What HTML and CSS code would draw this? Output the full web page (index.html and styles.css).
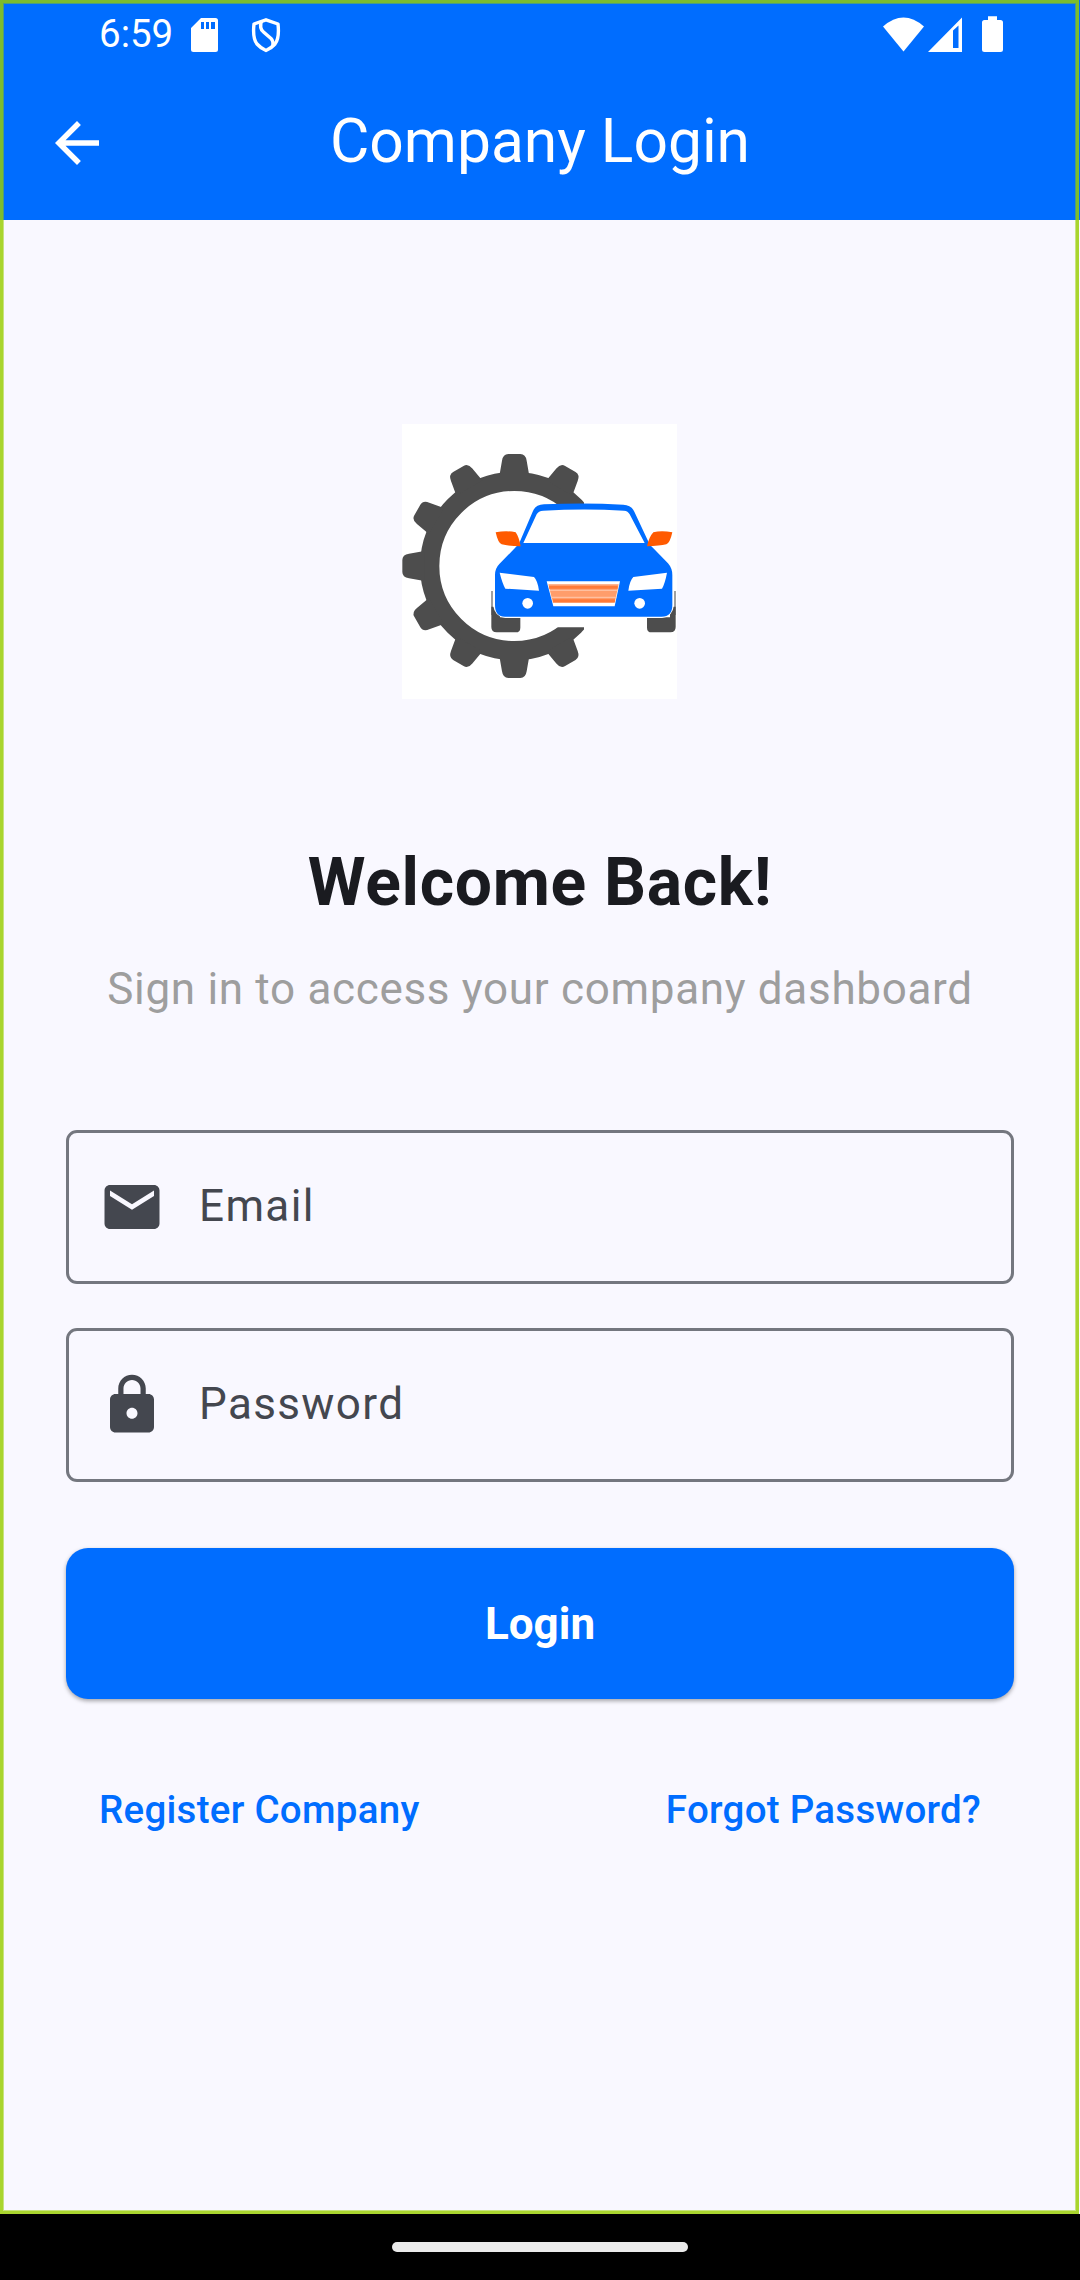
FILE: index.html
```html
<!DOCTYPE html>
<html lang="en">
<head>
<meta charset="utf-8">
<title>Company Login</title>
<link rel="stylesheet" href="styles.css">
</head>
<body>
<div class="app">
  <div class="status">
    <span class="clock">6:59</span>
    <svg class="sd" viewBox="0 0 27 34"><path fill="#fff" fill-rule="evenodd" d="M10 0H24.500Q27 0 27 2.500V31.500Q27 34 24.500 34H2.500Q0 34 0 31.500V10ZM10 4V11H13V4ZM15 4V11H18V4ZM20 4V11H24V4Z"/></svg>
    <svg class="shield" viewBox="0 0 30 36"><g fill="none" stroke="#fff" stroke-width="3.400" stroke-linejoin="round"><path d="M15 2.800 27 7Q28.600 21 24 27Q20 31.500 15 33.500Q10 31.500 6 27Q1.400 21 3 7Z"/><path d="M10.500 4Q8 11.500 12.500 15L20 21.500Q23 24.500 21.500 29.500"/></g></svg>
    <svg class="signals" viewBox="0 0 120 36"><g fill="#fff"><path d="M0 10.500Q20.500-7.500 41 10.500L20.500 35.500Z"/><path fill-rule="evenodd" d="M45 36 79 1.500V36ZM70 14.500V32H75.500V9.500Z"/><path d="M105 .3H114V4H117.500Q120 4 120 6.500V33.500Q120 36 117.500 36H101.500Q99 36 99 33.500V6.500Q99 4 101.500 4H105Z"/></g></svg>
  </div>
  <header class="bar">
    <svg class="back" viewBox="0 0 24 24"><path fill="#fff" d="M20 11H7.830l5.590-5.590L12 4l-8 8 8 8 1.410-1.410L7.830 13H20v-2z"/></svg>
    <h1 class="title">Company Login</h1>
  </header>
  <main class="content">
    <svg class="logo" viewBox="36 27 825 825">
      <defs>
        <path id="tooth" d="M-45-270-37-316Q-34-336-18-336H18Q34-336 37-316L45-270Z"/>
        <clipPath id="gear-clip"><path d="M36 27H582V268H480V637H582V852H36Z"/></clipPath>
      </defs>
      <rect x="36" y="27" width="825" height="825" fill="#fff"/>
      <g clip-path="url(#gear-clip)" fill="#4d4d4d">
        <circle cx="373" cy="453" r="254" fill="none" stroke="#4d4d4d" stroke-width="58"/>
        <g transform="translate(373 453)">
          <use href="#tooth"/>
          <use href="#tooth" transform="rotate(30)"/>
          <use href="#tooth" transform="rotate(150)"/>
          <use href="#tooth" transform="rotate(180)"/>
          <use href="#tooth" transform="rotate(210)"/>
          <use href="#tooth" transform="rotate(240)"/>
          <use href="#tooth" transform="rotate(270)"/>
          <use href="#tooth" transform="rotate(300)"/>
          <use href="#tooth" transform="rotate(330)"/>
        </g>
      </g>
      <path fill="#a0a0a0" d="M303 528H309V600H303ZM852 528H858V600H852Z"/>
      <path fill="#4d4d4d" d="M304 575H330V607H391V638Q391 652 377 652H320Q304 652 304 636ZM857 575H840V607H771V638Q771 652 785 652H841Q857 652 857 636Z"/>
      <path fill="#fff" d="M309 528V570Q314 606 346 609H816Q848 606 852 570V528Z"/>
      <path fill="#006dff" d="M387 386 428 290Q436 269 462 268Q585 262 700 269Q724 270 733 290L778 386Q782 392 790 400L834 445Q847 460 847 480V570Q847 605 815 605H345Q315 605 315 570V480Q315 460 328 447L372 402Z"/>
      <path fill="#fff" d="M400 384 440 298Q445 288 460 287Q585 280 702 287Q714 288 719 298L764 384Z"/>
      <path fill="#ff5a00" d="M317 352Q350 346 377 352Q387 366 392 394Q355 393 335 388Q324 384 317 352ZM847 352Q814 346 790 352Q777 366 771 394Q809 393 829 388Q840 384 847 352Z"/>
      <path fill="#fff" d="M329 473 432 486Q443 497 447 527L346 521Q337 505 329 473ZM831 473 730 486Q719 497 715 527L816 521Q825 505 831 473ZM470 499H690L674 574H490Z"/>
      <circle cx="413" cy="565" r="16" fill="#fff"/><circle cx="749" cy="565" r="16" fill="#fff"/>
      <path fill="#ff9d6b" d="M475 508H686L674 564H489Z"/>
      <path stroke="#ff7a38" stroke-width="8" d="M477 517H683M489 557H675"/>
      <path stroke="#ffc0a0" stroke-width="4" d="M480 526H682M484 547H679"/>
    </svg>
    <h2 class="welcome">Welcome Back!</h2>
    <p class="sub">Sign in to access your company dashboard</p>
    <div class="field">
      <svg class="icon" viewBox="0 0 24 24"><path fill="#44474f" d="M20 4H4c-1.100 0-1.990.9-1.990 2L2 18c0 1.100.9 2 2 2h16c1.100 0 2-.9 2-2V6c0-1.100-.9-2-2-2zm0 4-8 5-8-5V6l8 5 8-5v2z"/></svg>
      <span class="label">Email</span>
    </div>
    <div class="field">
      <svg class="icon" viewBox="0 0 24 24"><path fill="#44474f" d="M18 8h-1V6c0-2.760-2.240-5-5-5S7 3.240 7 6v2H6c-1.100 0-2 .9-2 2v10c0 1.100.9 2 2 2h12c1.100 0 2-.9 2-2V10c0-1.100-.9-2-2-2zm-6 9c-1.100 0-2-.9-2-2s.9-2 2-2 2 .9 2 2-.9 2-2 2zm3.100-9H8.900V6c0-1.710 1.390-3.100 3.100-3.100 1.710 0 3.100 1.390 3.100 3.100v2z"/></svg>
      <span class="label">Password</span>
    </div>
    <button class="login">Login</button>
    <div class="links"><a>Register Company</a><a>Forgot Password?</a></div>
  </main>
  <div class="frame"></div>
</div>
<div class="nav"><div class="pill"></div></div>
</body>
</html>
```
FILE: styles.css
```css
* { box-sizing: border-box; }
body { margin: 0; width: 1080px; height: 2280px; background: #000; font-family: Roboto, sans-serif; overflow: hidden; }
h1, h2, p { margin: 0; font-weight: 400; }
svg { display: block; flex: none; }
.app { position: relative; height: 2214px; background: #f9f8ff; }
.frame { position: absolute; inset: 0 1px 0 0; border: 3px solid rgba(151, 205, 0, .82); box-shadow: inset 0 0 0 1px rgba(151, 205, 0, .5); }
.status { height: 66px; background: #006dff; display: flex; align-items: flex-start; padding-left: 99px; }
.clock { width: 92px; color: #fff; font-size: 38.5px; line-height: 45px; margin-top: 11px; }
.sd { width: 27px; height: 34px; margin-top: 18px; }
.shield { width: 30px; height: 36px; margin: 17px 0 0 33px; }
.signals { width: 120px; height: 36px; margin: 16px 0 0 602px; }
.bar { height: 154px; background: #006dff; display: flex; align-items: center; padding: 0 44px; }
.back { width: 66px; height: 66px; }
.title { flex: 1; margin-right: 66px; text-align: center; color: #fff; font-size: 60.5px; line-height: 77px; position: relative; top: -2px; }
.content { padding: 204px 66px 0; display: flex; flex-direction: column; }
.logo { width: 275px; height: 275px; margin-left: 336px; }
.welcome { margin-top: 140px; text-align: center; font-size: 66px; line-height: 88px; font-weight: 700; color: #1a1b20; letter-spacing: .6875px; }
.sub { margin-top: 29px; text-align: center; font-size: 44px; line-height: 66px; color: #9e9e9e; letter-spacing: .6875px; white-space: nowrap; }
.field { height: 154px; border: 3px solid #74777f; border-radius: 11px; display: flex; align-items: center; padding-left: 30px; margin-top: 44px; }
.sub + .field { margin-top: 108px; }
.icon { width: 66px; height: 66px; }
.label { margin: 0 0 2px 34px; font-size: 44px; line-height: 66px; letter-spacing: 1.375px; color: #44474f; }
.login { margin-top: 66px; height: 151px; border: 0; border-radius: 22px; background: #006dff; color: #fff; font: 700 44px/66px Roboto, sans-serif; box-shadow: 0 2px 4px rgba(0, 0, 0, .35); }
.links { margin-top: 78px; display: flex; justify-content: space-between; padding: 0 33px; font-size: 38.5px; line-height: 66px; font-weight: 500; color: #006dff; letter-spacing: .275px; }
.nav { height: 66px; background: #000; display: flex; justify-content: center; padding-top: 28px; }
.pill { width: 296px; height: 10px; border-radius: 5px; background: #ebebeb; }
```
